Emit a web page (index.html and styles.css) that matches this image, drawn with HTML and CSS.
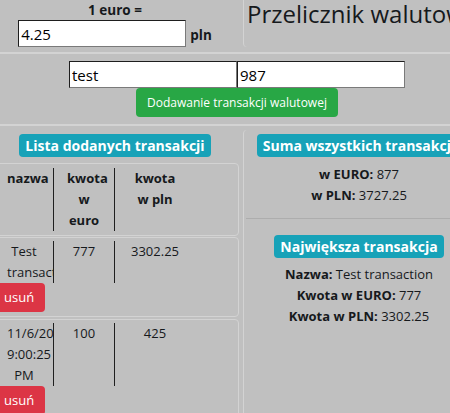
FILE: index.html
```html
<!DOCTYPE html>
<html lang="pl">
<head>
<meta charset="utf-8">
<title>Przelicznik walutowy</title>
<link rel="stylesheet" href="styles.css">
</head>
<body>
<div class="page">
  <header class="top">
    <div class="rate">
      <div class="rate-label">1 euro =</div>
      <div class="rate-row">
        <input class="field rate-input" type="text" value="4.25">
        <span class="unit">pln</span>
      </div>
    </div>
    <div class="title-box">
      <h1 class="title">Przelicznik walutowy</h1>
    </div>
  </header>

  <section class="add">
    <div class="add-fields">
      <input class="field add-input" type="text" value="test">
      <input class="field add-input" type="text" value="987">
    </div>
    <button class="btn btn-green" type="button">Dodawanie transakcji walutowej</button>
  </section>

  <main class="bottom">
    <div class="list">
      <div class="badge-wrap"><span class="badge">Lista dodanych transakcji</span></div>

      <div class="card card-head">
        <div class="cells head">
          <div class="cell c1">nazwa</div>
          <div class="cell c2">kwota w euro</div>
          <div class="cell c3">kwota w pln</div>
        </div>
      </div>

      <div class="card card-row">
        <div class="cells">
          <div class="cell c1">Test transaction</div>
          <div class="cell c2">777</div>
          <div class="cell c3">3302.25</div>
        </div>
        <button class="btn btn-red" type="button">usuń</button>
      </div>

      <div class="card card-row">
        <div class="cells">
          <div class="cell c1">11/6/2023, 9:00:25 PM</div>
          <div class="cell c2">100</div>
          <div class="cell c3">425</div>
        </div>
        <button class="btn btn-red" type="button">usuń</button>
      </div>
    </div>

    <aside class="summary">
      <div class="badge-wrap"><span class="badge">Suma wszystkich transakcji</span></div>
      <p class="line"><b>w EURO:</b> 877</p>
      <p class="line"><b>w PLN:</b> 3727.25</p>
      <hr class="sep">
      <div class="badge-wrap badge-wrap-2"><span class="badge">Największa transakcja</span></div>
      <p class="line"><b>Nazwa:</b> Test transaction</p>
      <p class="line"><b>Kwota w EURO:</b> 777</p>
      <p class="line"><b>Kwota w PLN:</b> 3302.25</p>
    </aside>
  </main>
</div>
</body>
</html>
```

FILE: styles.css
```css
html, body {
  margin: 0;
  padding: 0;
  overflow: hidden;
  background: #c0c0c0;
}

body {
  width: 450px;
  height: 413px;
  font-family: "Open Sans", "Noto Sans", sans-serif;
  font-size: 13px;
  line-height: 21px;
  color: #16191c;
}

.page {
  width: 474px;
}

/* top */
.top {
  display: flex;
  height: 52px;
  border-bottom: 2px solid #d3d3d3;
}

.rate {
  flex: none;
  width: 248px;
  margin-left: -9px;
  text-align: center;
}

.rate-label {
  font-weight: 700;
  font-size: 13.5px;
  line-height: 20px;
}

.rate-row {
  display: flex;
  justify-content: center;
  align-items: baseline;
  gap: 4px;
}

.unit {
  font-weight: 700;
  font-size: 13.5px;
}

.field {
  box-sizing: border-box;
  width: 168px;
  height: 27px;
  margin: 0;
  padding: 0 2px;
  border: 1px solid;
  border-color: #1e1e1e #7a7a7a #7a7a7a #1e1e1e;
  background: #fff;
  color: #000;
  font-family: "Open Sans", "Noto Sans", sans-serif;
  font-size: 15px;
  outline: none;
}

.title-box {
  flex: 1;
  height: 47px;
  margin-left: 4px;
  padding-left: 3px;
  border-left: 1px solid #d3d3d3;
  border-bottom-left-radius: 4px;
}

.title {
  margin: 0;
  font-size: 24px;
  font-weight: 400;
  line-height: 28px;
  white-space: nowrap;
  color: #16191c;
}

/* add transaction */
.add {
  display: flex;
  flex-direction: column;
  align-items: center;
  padding: 7px 0;
  border-bottom: 2px solid #d3d3d3;
}

.add-fields {
  display: flex;
}

.btn {
  display: block;
  border: none;
  border-radius: 4px;
  padding: 4px 12px;
  font-family: "Open Sans", "Noto Sans", sans-serif;
  font-size: 13px;
  line-height: 21px;
  color: #fff;
  cursor: pointer;
}

.btn-green {
  background: #28a745;
  font-size: 12px;
  padding: 4px 11px;
}

.btn-red {
  background: #dc3545;
  padding: 4px 11px 4px 12px;
}

/* bottom */
.bottom {
  display: flex;
  align-items: flex-start;
}

.list {
  flex: none;
  width: 248px;
  margin-left: -9px;
}

.badge-wrap {
  display: flex;
  justify-content: center;
  margin: 8px 0 6px;
}

.badge {
  display: inline-block;
  padding: 4px 6px;
  border-radius: 4px;
  background: #17a2b8;
  color: #fff;
  font-size: 14px;
  font-weight: 700;
  line-height: 15px;
  white-space: nowrap;
}

.card {
  border: 1px solid #d3d3d3;
  border-radius: 4px;
}

.card-head {
  padding: 4px 0;
  margin-bottom: 1px;
}

.card-row {
  padding: 3px 0 4px;
  margin-bottom: 2px;
}

.cells {
  display: flex;
}

.head {
  font-weight: 700;
}

.cell {
  box-sizing: border-box;
  overflow: hidden;
  text-align: center;
  padding: 0 13px;
}

.c1 {
  width: 62px;
  padding: 0 12px 0 15px;
  border-right: 1px solid #1f1f1f;
}

.c2 {
  width: 61px;
  border-right: 1px solid #1f1f1f;
}

.c3 {
  width: 80px;
}

/* summary */
.summary {
  flex: none;
  box-sizing: border-box;
  width: 231px;
  margin: 4px 0 0 4px;
  padding: 0 2px;
  min-height: 300px;
  border-left: 1px solid #d3d3d3;
  border-top-left-radius: 4px;
  text-align: center;
}

.summary .badge-wrap {
  margin: 4px 0 7px;
}

.summary .badge-wrap-2 {
  margin: 0 0 6px;
}

.line {
  margin: 0;
  white-space: nowrap;
}

.line b {
  font-weight: 700;
}

.sep {
  margin: 12px 0 16px;
  border: 0;
  border-top: 1px solid #adadad;
  height: 0;
}
```
